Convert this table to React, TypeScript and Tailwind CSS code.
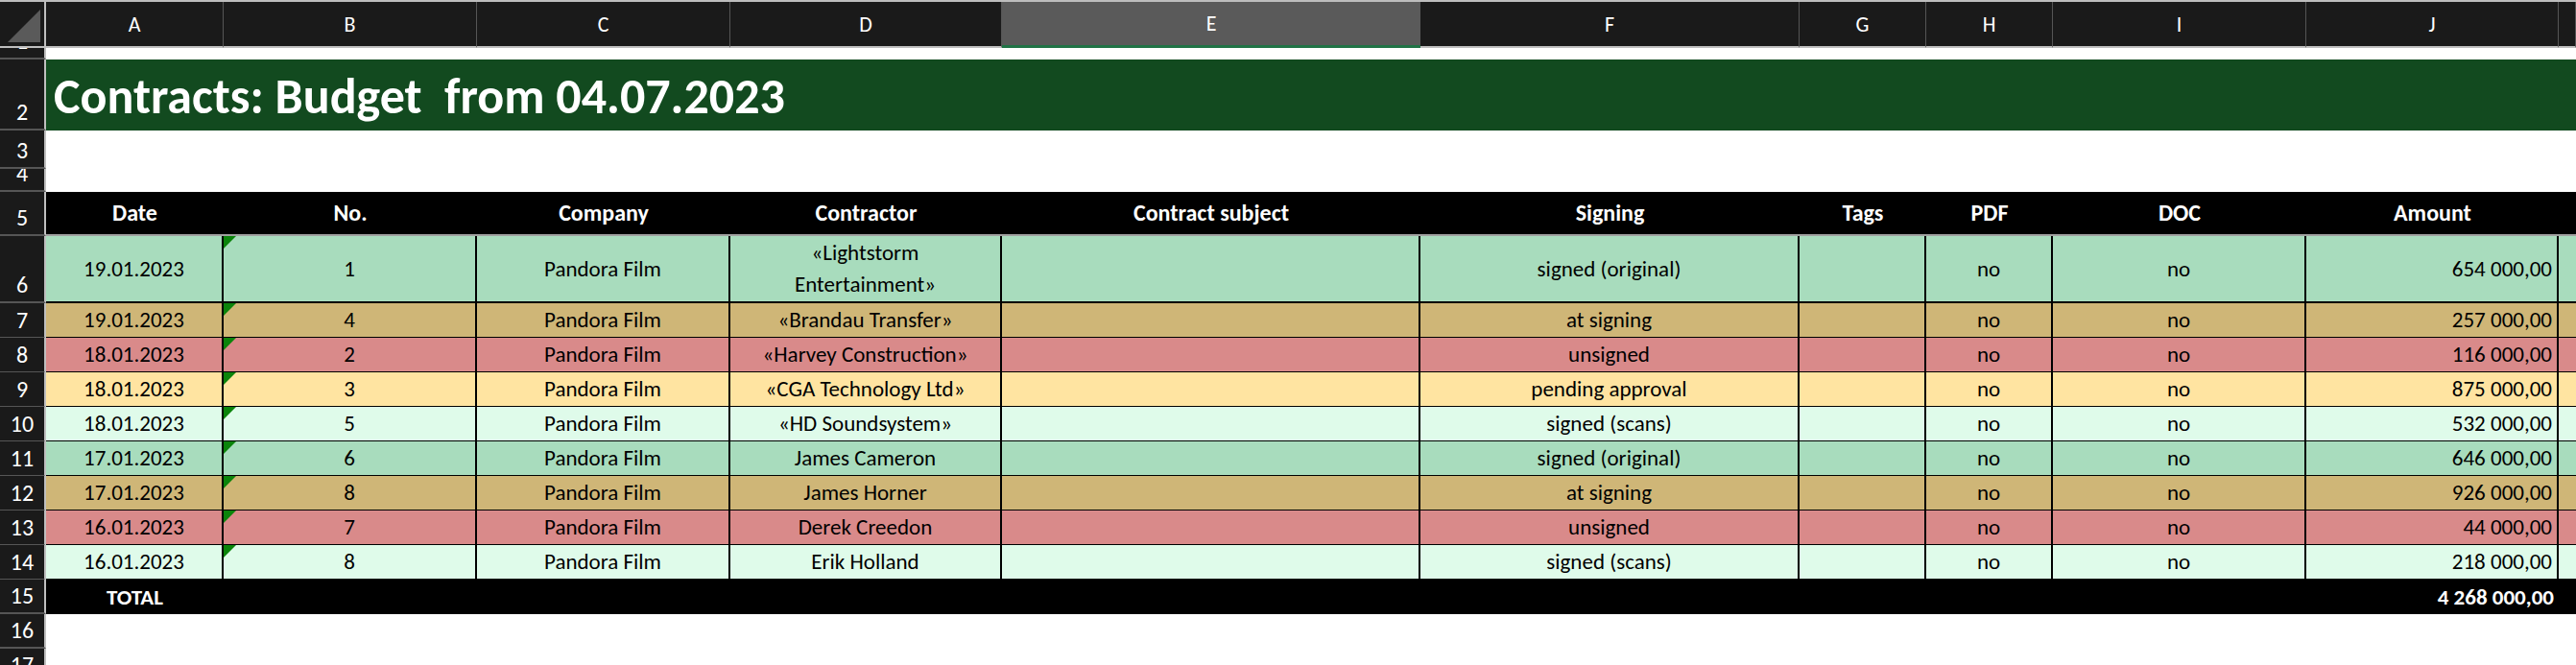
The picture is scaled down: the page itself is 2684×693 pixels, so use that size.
import React from 'react';

// ── Layout constants ──────────────────────────────────────────────────────────

// row header + columns A..J (each width includes its 2px right line) + K (rest)
const COLS =
  'grid grid-cols-[48px_185px_264px_264px_283px_436px_395px_132px_132px_264px_263px_minmax(0,1fr)]';

const LETTERS = ['A', 'B', 'C', 'D', 'E', 'F', 'G', 'H', 'I', 'J', ''];

const HEADERS = ['Date', 'No.', 'Company', 'Contractor', 'Contract subject', 'Signing', 'Tags', 'PDF', 'DOC', 'Amount', ''];

type Contract = {
  row: string;
  date: string;
  no: string;
  contractor: React.ReactNode;
  signing: string;
  amount: string;
  bg: string;
  tall?: boolean;
};

const CONTRACTS: Contract[] = [
  {
    row: '6', date: '19.01.2023', no: '1',
    contractor: <>«Lightstorm<br />Entertainment»</>,
    signing: 'signed (original)', amount: '654 000,00', bg: 'bg-[#a8dcbd]', tall: true,
  },
  { row: '7', date: '19.01.2023', no: '4', contractor: '«Brandau Transfer»', signing: 'at signing', amount: '257 000,00', bg: 'bg-[#cfb677]' },
  { row: '8', date: '18.01.2023', no: '2', contractor: '«Harvey Construction»', signing: 'unsigned', amount: '116 000,00', bg: 'bg-[#d98a8a]' },
  { row: '9', date: '18.01.2023', no: '3', contractor: '«CGA Technology Ltd»', signing: 'pending approval', amount: '875 000,00', bg: 'bg-[#ffe4a1]' },
  { row: '10', date: '18.01.2023', no: '5', contractor: '«HD Soundsystem»', signing: 'signed (scans)', amount: '532 000,00', bg: 'bg-[#dffbea]' },
  { row: '11', date: '17.01.2023', no: '6', contractor: 'James Cameron', signing: 'signed (original)', amount: '646 000,00', bg: 'bg-[#a8dcbd]' },
  { row: '12', date: '17.01.2023', no: '8', contractor: 'James Horner', signing: 'at signing', amount: '926 000,00', bg: 'bg-[#cfb677]' },
  { row: '13', date: '16.01.2023', no: '7', contractor: 'Derek Creedon', signing: 'unsigned', amount: '44 000,00', bg: 'bg-[#d98a8a]' },
  { row: '14', date: '16.01.2023', no: '8', contractor: 'Erik Holland', signing: 'signed (scans)', amount: '218 000,00', bg: 'bg-[#dffbea]' },
];

// ── Pieces ────────────────────────────────────────────────────────────────────

const RowNum = ({ n }: { n: string }) => (
  <div className="flex items-end justify-center overflow-hidden bg-[#1a1a1a] border-r-2 border-b-2 border-r-[#bfbfbf] border-b-[#555] pb-[5px] text-[24px] leading-none text-white">
    {n}
  </div>
);

const Cell = ({ children, bg, last, align = 'center' }: {
  children?: React.ReactNode;
  bg: string;
  last?: boolean;
  align?: 'center' | 'right';
}) => (
  <div
    className={`flex items-center ${align === 'right' ? 'justify-end pr-[5px]' : 'justify-center text-center'} ${bg} border-b-2 border-black ${last ? '' : 'border-r-2'}`}
  >
    {children}
  </div>
);

// green "number stored as text" corner marker
const Marker = () => (
  <svg className="absolute left-0 top-0" width="13" height="13" viewBox="0 0 13 13">
    <polygon points="0,0 13,0 0,13" fill="#0b840b" />
  </svg>
);

// ── Main ──────────────────────────────────────────────────────────────────────

export default function App() {
  return (
    <div className="w-[2684px] h-[693px] overflow-hidden bg-white font-[Carlito,Lato,sans-serif] text-[23px] text-black">
      {/* top edge */}
      <div className="h-[2px] bg-[#bdbdbd]" />

      {/* column letters */}
      <div className={`${COLS} h-[48px]`}>
        <div className="bg-[#1a1a1a] border-r-2 border-b-2 border-[#bfbfbf] flex items-start">
          <svg width="46" height="46" viewBox="0 0 46 46">
            <polygon points="8,42 42,8 42,42" fill="#5a5a5a" />
          </svg>
        </div>
        {LETTERS.map((l, i) =>
          l === 'E' ? (
            <div key={i} className="flex items-center justify-center bg-[#5a5a5a] border-b-[3px] border-[#217346] text-[22px] text-white">
              {l}
            </div>
          ) : (
            <div key={i} className="flex items-center justify-center bg-[#1a1a1a] border-r border-r-[#555] border-b-2 border-b-[#bfbfbf] text-[22px] text-white">
              {l}
            </div>
          )
        )}
      </div>

      {/* row 1 (scrolled) */}
      <div className={`${COLS} h-[12px]`}>
        <RowNum n="1" />
        <div className="col-span-11" />
      </div>

      {/* row 2: title */}
      <div className={`${COLS} h-[74px]`}>
        <RowNum n="2" />
        <div className="col-span-11 flex items-center bg-[#124a1f] pl-[8px] pt-[2px]">
          <span className="whitespace-pre text-[52px] font-bold leading-none text-white">
            Contracts: Budget  from 04.07.2023
          </span>
        </div>
      </div>

      {/* rows 3, 4 */}
      <div className={`${COLS} h-[40px]`}>
        <RowNum n="3" />
        <div className="col-span-11" />
      </div>
      <div className={`${COLS} h-[24px]`}>
        <RowNum n="4" />
        <div className="col-span-11" />
      </div>

      {/* row 5: table header */}
      <div className={`${COLS} h-[46px]`}>
        <RowNum n="5" />
        {HEADERS.map((h, i) => (
          <div key={i} className="flex items-center justify-center bg-black border-b-2 border-[#a0a0a0] text-[24px] font-bold text-white">
            {h}
          </div>
        ))}
      </div>

      {/* rows 6..14: contracts */}
      {CONTRACTS.map(c => (
        <div key={c.row} className={`${COLS} ${c.tall ? 'h-[70px]' : 'h-[36px]'}`}>
          <RowNum n={c.row} />
          <Cell bg={c.bg}>{c.date}</Cell>
          <div className={`relative flex items-center justify-center ${c.bg} border-r-2 border-b-2 border-black`}>
            <Marker />
            {c.no}
          </div>
          <Cell bg={c.bg}>Pandora Film</Cell>
          <Cell bg={c.bg}><span className="leading-[33px]">{c.contractor}</span></Cell>
          <Cell bg={c.bg} />
          <Cell bg={c.bg}>{c.signing}</Cell>
          <Cell bg={c.bg} />
          <Cell bg={c.bg}>no</Cell>
          <Cell bg={c.bg}>no</Cell>
          <Cell bg={c.bg} align="right">{c.amount}</Cell>
          <Cell bg={c.bg} last />
        </div>
      ))}

      {/* row 15: total */}
      <div className={`${COLS} h-[36px]`}>
        <RowNum n="15" />
        <div className="flex items-center justify-center bg-black font-bold text-white">TOTAL</div>
        <div className="col-span-8 bg-black" />
        <div className="flex items-center justify-end bg-black pr-[5px] font-bold text-white">4 268 000,00</div>
        <div className="bg-black" />
      </div>

      {/* rows 16, 17 */}
      <div className={`${COLS} h-[36px]`}>
        <RowNum n="16" />
        <div className="col-span-11" />
      </div>
      <div className={`${COLS} h-[36px]`}>
        <RowNum n="17" />
        <div className="col-span-11" />
      </div>
    </div>
  );
}
